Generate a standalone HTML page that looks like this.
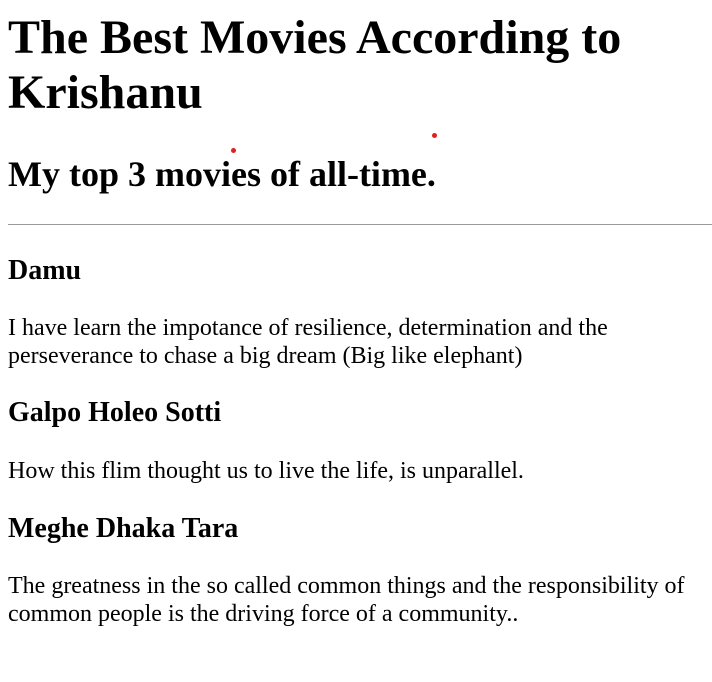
<!DOCTYPE html>
<html><head><meta charset="utf-8"><style>
html,body{margin:0;padding:0;background:#fff;width:712px;height:682px;overflow:hidden;position:relative}
body{font-family:"Liberation Serif",serif;color:#000}
.a{position:absolute;left:8px;margin:0;white-space:nowrap}
h1{font-size:48px;line-height:55px;font-weight:bold}
h2{font-size:36px;line-height:41px;font-weight:bold}
h3{font-size:28px;line-height:32px;font-weight:bold}
p{font-size:24px;line-height:28px}
hr{position:absolute;left:8px;top:224px;width:704px;margin:0;border:0;border-top:1px solid #999;height:0}
.d{position:absolute;width:5px;height:5px;border-radius:50%;background:#d22}
</style></head><body>
<h1 class="a" style="top:10px">The Best Movies According to<br>Krishanu</h1>
<h2 class="a" style="top:154px">My top 3 movies of all-time.</h2>
<div class="d" style="left:231px;top:148px"></div>
<div class="d" style="left:432px;top:133px"></div>
<hr>
<h3 class="a" style="top:255px">Damu</h3>
<p class="a" style="top:314px">I have learn the impotance of resilience, determination and the<br>perseverance to chase a big dream (Big like elephant)</p>
<h3 class="a" style="top:397px">Galpo Holeo Sotti</h3>
<p class="a" style="top:457px">How this flim thought us to live the life, is unparallel.</p>
<h3 class="a" style="top:513px">Meghe Dhaka Tara</h3>
<p class="a" style="top:572px">The greatness in the so called common things and the responsibility of<br>common people is the driving force of a community..</p>
</body></html>
